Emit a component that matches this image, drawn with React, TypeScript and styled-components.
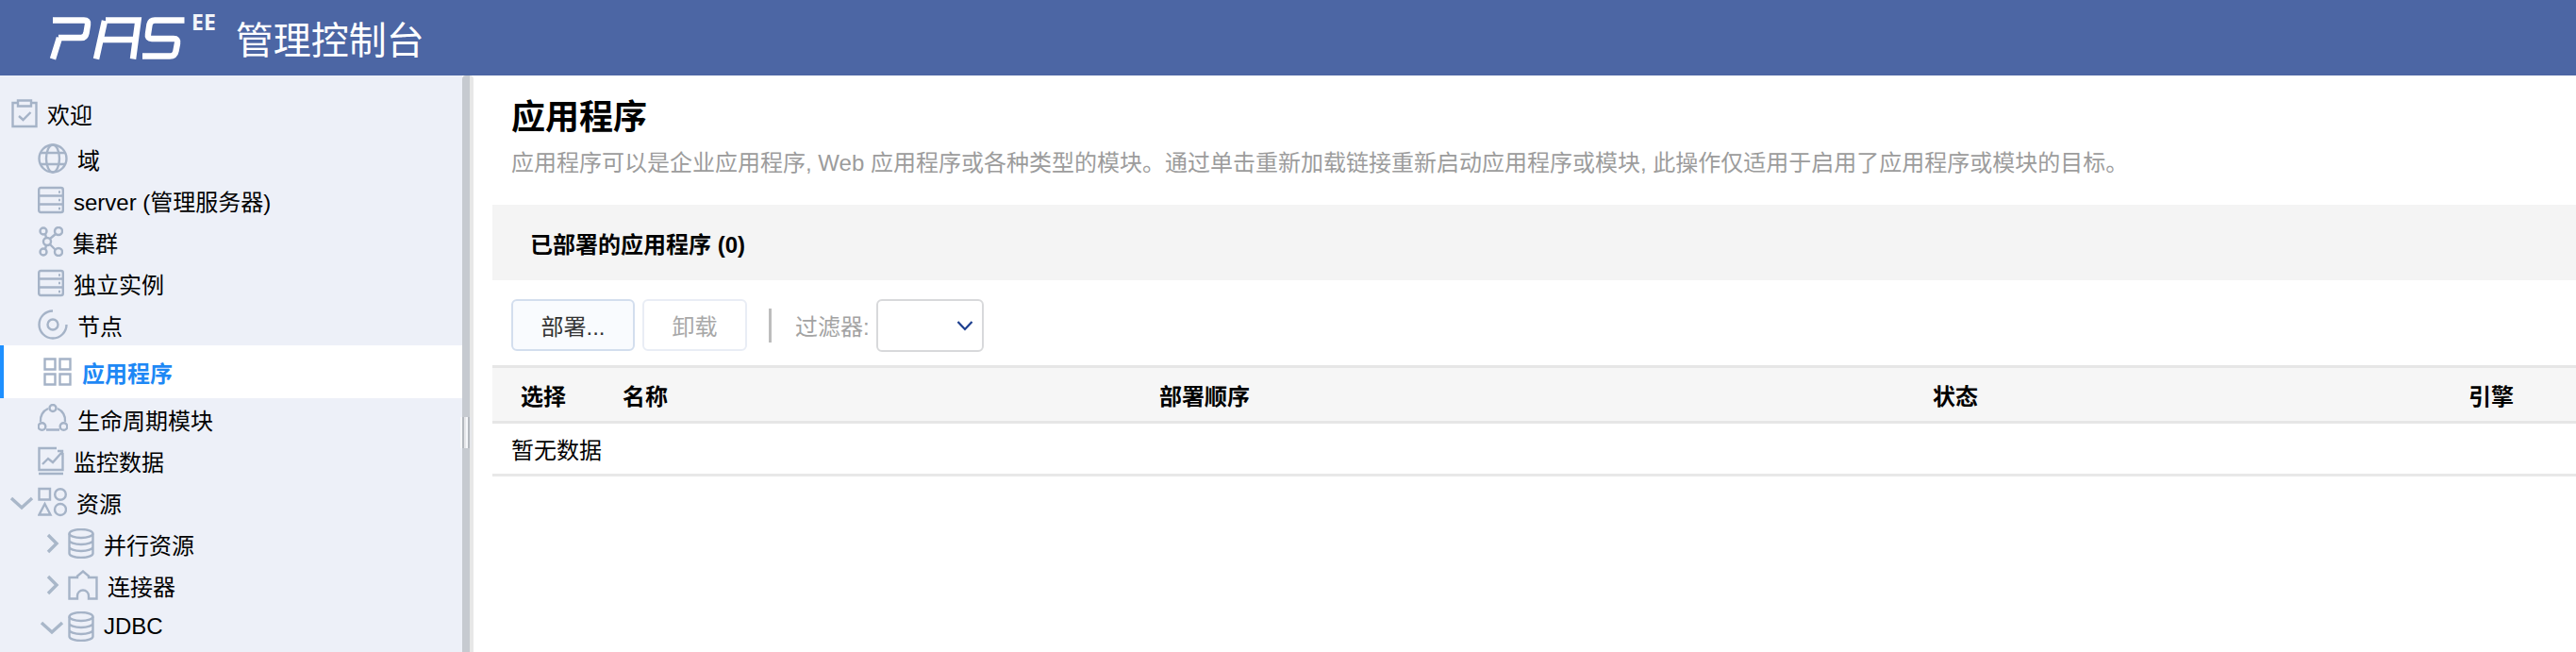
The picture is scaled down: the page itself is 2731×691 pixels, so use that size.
import React from "react";
import styled, { createGlobalStyle } from "styled-components";

const GlobalStyle = createGlobalStyle`
    html, body {
        margin: 0;
        padding: 0;
        height: 100%;
        overflow: hidden;
        background: #fff;
        font-family: "Liberation Sans", "Noto Sans CJK SC", sans-serif;
        font-size: 24px;
        color: #000;
    }
`;

const Page = styled.div`
    display: flex;
    flex-direction: column;
    width: 2731px;
    height: 691px;
    overflow: hidden;
`;

const TopBar = styled.header`
    display: flex;
    align-items: center;
    flex: 0 0 80px;
    padding-left: 50px;
    background: #4c66a4;
    color: #fff;
`;

const LogoEdition = styled.span`
    align-self: flex-start;
    margin: 11px 0 0 3px;
    font-family: "Open Sans", sans-serif;
    font-size: 23px;
    font-weight: 700;
    line-height: 24px;
    color: #f2f4f9;
`;

const AppTitle = styled.span`
    margin-left: 21px;
    font-size: 40px;
    line-height: 56px;
    margin-top: 6px;
`;

const Body = styled.div`
    display: flex;
    flex: 1;
    min-height: 0;
`;

const Sidebar = styled.nav`
    flex: 0 0 490px;
    padding-top: 18px;
    box-sizing: border-box;
    background: #edf0f8;
    overflow: hidden;
`;

const Row = styled.div<{ $indent: number; $active?: boolean }>`
    display: flex;
    align-items: center;
    box-sizing: border-box;
    height: ${p => (p.$active ? 56 : 44)}px;
    padding-left: ${p => p.$indent}px;
    white-space: nowrap;
    ${p =>
        p.$active &&
        `
        border-left: 4px solid #1e90ff;
        background: #fff;
        color: #1e88f5;
        font-weight: 700;
    `}
`;

const WelcomeRow = styled(Row)`
    margin-bottom: 4px;
`;

const Caret = styled.svg`
    flex: 0 0 32px;
    width: 32px;
    height: 24px;
    fill: none;
    stroke: #a9b7c9;
    stroke-width: 3.4;
`;

const NavIcon = styled.svg<{ $w: number }>`
    flex: 0 0 ${p => p.$w}px;
    width: ${p => p.$w}px;
    height: 32px;
    margin-right: 10px;
    fill: none;
    stroke: #a5b3c7;
    stroke-width: 2.4;
`;

const Splitter = styled.div`
    position: relative;
    flex: 0 0 8px;
    background: #c6cad0;
    border-right: 4px solid #e7e7e7;
    border-radius: 4px 4px 0 0;
`;

const SplitterGrip = styled.div`
    position: absolute;
    left: -2px;
    top: 362px;
    width: 12px;
    height: 33px;
    background: repeating-linear-gradient(
        90deg,
        #f6f7fa 0,
        #f6f7fa 2px,
        #b4b8be 2px,
        #b4b8be 4px,
        #e6e7ea 4px,
        #e6e7ea 6px
    );
`;

const Main = styled.main`
    flex: 1;
    min-width: 0;
    padding-left: 20px;
    background: #fff;
`;

const Heading = styled.div`
    padding: 20px 0 27px 20px;
`;

const PageTitle = styled.h1`
    margin: 0 0 6px;
    font-size: 36px;
    font-weight: 700;
    line-height: 50px;
`;

const PageHint = styled.p`
    margin: 0;
    font-size: 24px;
    line-height: 34px;
    color: #9c9c9c;
    white-space: nowrap;
`;

const Band = styled.div`
    display: flex;
    align-items: center;
    height: 80px;
    padding-left: 40px;
    background: #f4f4f4;
    font-weight: 700;
`;

const Toolbar = styled.div`
    display: flex;
    align-items: center;
    height: 90px;
    box-sizing: border-box;
    padding: 20px 0 15px 20px;
`;

const ActionButton = styled.button<{ $disabled?: boolean; $w: number }>`
    width: ${p => p.$w}px;
    height: 55px;
    margin-right: 8px;
    padding: 0;
    border: 2px solid ${p => (p.$disabled ? "#e9edf5" : "#d3deee")};
    border-radius: 6px;
    background: ${p => (p.$disabled ? "#fff" : "#f9fbfe")};
    color: ${p => (p.$disabled ? "#a8a8a8" : "#333")};
    font: inherit;
    font-size: 24px;
`;

const ToolbarRule = styled.span`
    width: 3px;
    height: 36px;
    margin: 0 25px 0 15px;
    background: #bdbdbd;
`;

const FilterLabel = styled.span`
    margin-right: 7px;
    color: #a3a3a3;
`;

const FilterSelect = styled.div`
    display: flex;
    align-items: center;
    justify-content: flex-end;
    box-sizing: border-box;
    width: 114px;
    height: 56px;
    padding-right: 9px;
    border: 2px solid #d8d9db;
    border-radius: 6px;
    background: #fff;
`;

const SelectArrow = styled.svg`
    width: 18px;
    height: 12px;
    fill: none;
    stroke: #1d3f8f;
    stroke-width: 2.2;
`;

const TableHead = styled.div`
    display: grid;
    grid-template-columns: 108px 569px 820px 568px 144px;
    align-items: center;
    box-sizing: border-box;
    height: 62px;
    border-top: 3px solid #e6e6e6;
    border-bottom: 3px solid #e6e6e6;
    background: #f6f6f6;
    font-weight: 700;
`;

const HeadCell = styled.div`
    padding-left: 30px;
`;

const EmptyRow = styled.div`
    display: flex;
    align-items: center;
    box-sizing: border-box;
    height: 56px;
    padding-left: 20px;
    border-bottom: 3px solid #e8e8e8;
`;

const CaretRight = () => (
    <Caret viewBox="0 0 32 24">
        <path d="M11 3l9 9-9 9" />
    </Caret>
);

const CaretDown = () => (
    <Caret viewBox="0 0 32 24">
        <path d="M4 8l11 10 11-10" />
    </Caret>
);

const ClipboardIcon = () => (
    <NavIcon $w={28} viewBox="0 0 28 32">
        <path d="M7 5H1.5v25h25V5H21M7 2.5h14v6H7zM8 19l4.500 4 8-8" />
    </NavIcon>
);

const GlobeIcon = () => (
    <NavIcon $w={32} viewBox="0 0 32 32">
        <circle cx="16" cy="16" r="14.500" />
        <ellipse cx="16" cy="16" rx="7" ry="14.500" />
        <path d="M3 10h26M3 22h26" />
    </NavIcon>
);

const ServerIcon = () => (
    <NavIcon $w={28} viewBox="0 0 28 32">
        <rect x="1.200" y="3" width="25.600" height="26" rx="2" />
        <path d="M1 11.500h26M1 20.500h26M22 7.500h2M22 16h2M22 25h2" />
    </NavIcon>
);

const ClusterIcon = () => (
    <NavIcon $w={26} viewBox="0 0 26 32">
        <circle cx="5" cy="5" r="3.500" />
        <circle cx="21" cy="5" r="4" />
        <circle cx="9" cy="16" r="4" />
        <circle cx="5" cy="27" r="3.500" />
        <circle cx="21" cy="27" r="4" />
        <path d="M7 8l1 4M18 8l-6 5M7 24l1-4M18 25l-6-6" />
    </NavIcon>
);

const RingIcon = () => (
    <NavIcon $w={32} viewBox="0 0 32 32">
        <path d="M16 1.500a14.500 14.500 0 1 0 14.500 14.500" />
        <circle cx="16" cy="16" r="5.500" />
    </NavIcon>
);

const GridIcon = () => (
    <NavIcon $w={30} viewBox="0 0 30 32" style={{ marginRight: 11 }}>
        <path d="M1.500 2.500h11v11h-11zM17.500 2.500h11v11h-11zM1.500 18.500h11v11h-11zM17.500 18.500h11v11h-11z" />
    </NavIcon>
);

const LifecycleIcon = () => (
    <NavIcon $w={32} viewBox="0 0 32 32">
        <path d="M11 5a13.500 13.500 0 0 0-8 14M21 5a13.500 13.500 0 0 1 8 14M9 27.500h14" />
        <circle cx="16" cy="4.500" r="3.500" />
        <circle cx="4.500" cy="24" r="3.800" />
        <circle cx="27.500" cy="24" r="3.800" />
    </NavIcon>
);

const ChartIcon = () => (
    <NavIcon $w={28} viewBox="0 0 28 32">
        <path d="M20 3H1.500v23h25V8M1 30h26M5 20l6-6 5 4 9-10M21 6h5v4" />
    </NavIcon>
);

const ShapesIcon = () => (
    <NavIcon $w={31} viewBox="0 0 31 32">
        <path d="M1.500 2h11.500v11.500H1.500zM7.500 18L1.500 29.500h12z" />
        <circle cx="24" cy="8" r="5.800" />
        <circle cx="24" cy="24" r="6" />
    </NavIcon>
);

const DatabaseIcon = () => (
    <NavIcon $w={28} viewBox="0 0 28 32">
        <ellipse cx="14" cy="5.500" rx="12.500" ry="4.500" />
        <path d="M1.500 5.500v21c0 2.500 5.500 4.500 12.500 4.500s12.500-2 12.500-4.500v-21M1.500 12.500c0 2.500 5.500 4.500 12.500 4.500s12.500-2 12.500-4.500M1.500 19.500c0 2.500 5.500 4.500 12.500 4.500s12.500-2 12.500-4.500" />
    </NavIcon>
);

const PuzzleIcon = () => (
    <NavIcon $w={32} viewBox="0 0 32 32">
        <path d="M10 8V6.500l6-5 6 5V8h8.500v22.500H22v-3a6 6 0 0 0-12 0v3H1.500V8z" />
    </NavIcon>
);

function App() {
    return (
        <Page>
            <GlobalStyle />
            <TopBar>
                <svg width="150" height="50" viewBox="50 10 150 50">
                    <g fill="none" stroke="#fff" strokeWidth="6.500">
                        <path d="M56 16.500H89Q94 16.500 93 21L91.500 30Q90.500 35 86 35H62M63 35L56 57.500" />
                        <path d="M112 16.500H146.500L141 57.500M105 37H143M111 17L102 57.500" />
                        <path d="M195.500 16.500H164Q159.500 16.500 158.500 21L157 31Q156 36 161 36H184Q189 36 188 41L186.500 49Q185.500 54.500 180 54.500H151" />
                    </g>
                </svg>
                <LogoEdition>EE</LogoEdition>
                <AppTitle>管理控制台</AppTitle>
            </TopBar>
            <Body>
                <Sidebar>
                    <WelcomeRow $indent={12}>
                        <ClipboardIcon />
                        欢迎
                    </WelcomeRow>
                    <Row $indent={40}>
                        <GlobeIcon />域
                    </Row>
                    <Row $indent={40}>
                        <ServerIcon />
                        server (管理服务器)
                    </Row>
                    <Row $indent={41}>
                        <ClusterIcon />
                        集群
                    </Row>
                    <Row $indent={40}>
                        <ServerIcon />
                        独立实例
                    </Row>
                    <Row $indent={40}>
                        <RingIcon />
                        节点
                    </Row>
                    <Row $indent={42} $active>
                        <GridIcon />
                        应用程序
                    </Row>
                    <Row $indent={40}>
                        <LifecycleIcon />
                        生命周期模块
                    </Row>
                    <Row $indent={40}>
                        <ChartIcon />
                        监控数据
                    </Row>
                    <Row $indent={8}>
                        <CaretDown />
                        <ShapesIcon />
                        资源
                    </Row>
                    <Row $indent={40}>
                        <CaretRight />
                        <DatabaseIcon />
                        并行资源
                    </Row>
                    <Row $indent={40}>
                        <CaretRight />
                        <PuzzleIcon />
                        连接器
                    </Row>
                    <Row $indent={40}>
                        <CaretDown />
                        <DatabaseIcon />
                        JDBC
                    </Row>
                </Sidebar>
                <Splitter>
                    <SplitterGrip />
                </Splitter>
                <Main>
                    <Heading>
                        <PageTitle>应用程序</PageTitle>
                        <PageHint>
                            应用程序可以是企业应用程序, Web 应用程序或各种类型的模块。通过单击重新加载链接重新启动应用程序或模块, 此操作仅适用于启用了应用程序或模块的目标。
                        </PageHint>
                    </Heading>
                    <Band>已部署的应用程序 (0)</Band>
                    <Toolbar>
                        <ActionButton $w={131}>部署...</ActionButton>
                        <ActionButton $w={111} $disabled>
                            卸载
                        </ActionButton>
                        <ToolbarRule />
                        <FilterLabel>过滤器:</FilterLabel>
                        <FilterSelect>
                            <SelectArrow viewBox="0 0 18 12">
                                <path d="M1.500 2l7.500 8 7.500-8" />
                            </SelectArrow>
                        </FilterSelect>
                    </Toolbar>
                    <TableHead>
                        <HeadCell>选择</HeadCell>
                        <HeadCell>名称</HeadCell>
                        <HeadCell>部署顺序</HeadCell>
                        <HeadCell>状态</HeadCell>
                        <HeadCell>引擎</HeadCell>
                    </TableHead>
                    <EmptyRow>暂无数据</EmptyRow>
                </Main>
            </Body>
        </Page>
    );
}

export default App;
